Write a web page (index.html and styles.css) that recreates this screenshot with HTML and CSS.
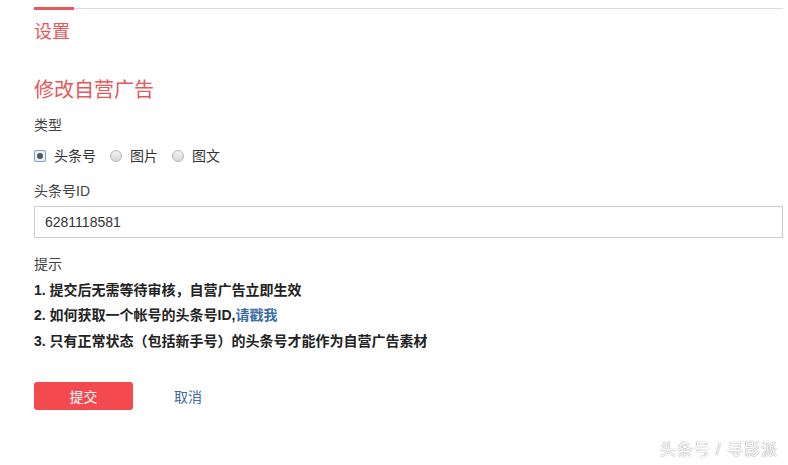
FILE: index.html
```html
<!DOCTYPE html>
<html lang="zh-CN">
<head>
  <meta charset="UTF-8">
  <title>设置 - 修改自营广告</title>
  <link rel="stylesheet" href="styles.css">
</head>
<body>
  <div class="page">
    <div class="tabs">
      <div class="tab-active">
        <span class="tab-bar"></span>
        <h2 class="tab-title">设置</h2>
      </div>
    </div>

    <h1 class="form-title">修改自营广告</h1>

    <div class="field">
      <label class="field-label">类型</label>
      <div class="radios">
        <label class="radio"><span class="dot checked"></span>头条号</label>
        <label class="radio"><span class="dot"></span>图片</label>
        <label class="radio"><span class="dot"></span>图文</label>
      </div>
    </div>

    <div class="field">
      <label class="field-label" for="uid">头条号ID</label>
      <input type="text" id="uid" value="6281118581">
    </div>

    <div class="tips">
      <p class="tips-head">提示</p>
      <p>1. 提交后无需等待审核，自营广告立即生效</p>
      <p>2. 如何获取一个帐号的头条号ID,<a href="#">请戳我</a></p>
      <p>3. 只有正常状态（包括新手号）的头条号才能作为自营广告素材</p>
    </div>

    <div class="actions">
      <button class="btn-submit">提交</button>
      <a class="btn-cancel" href="#">取消</a>
    </div>
  </div>

  <div class="watermark">头条号 / 寻影派</div>
</body>
</html>
```

FILE: styles.css
```css
* {
  box-sizing: border-box;
  margin: 0;
  padding: 0;
  font-family: "Liberation Sans", "Noto Sans CJK SC", sans-serif;
}

body {
  background: #fff;
  color: #333;
  width: 788px;
  height: 465px;
  overflow: hidden;
  position: relative;
}

.page {
  padding: 8px 5px 0 34px;
}

.tabs {
  border-top: 1px solid #dcdcdc;
}

.tab-active {
  width: 40px;
}

.tab-bar {
  display: block;
  height: 3px;
  margin-top: -2px;
  background: #e8575a;
}

.tab-title {
  font-size: 18px;
  font-weight: normal;
  color: #e8575a;
  line-height: 24px;
  margin-top: 10px;
}

.form-title {
  font-size: 20px;
  font-weight: normal;
  color: #e8575a;
  line-height: 26px;
  margin-top: 33px;
}

.field {
  margin-top: 12px;
}

.field-label {
  display: block;
  font-size: 14px;
  line-height: 20px;
  color: #444;
}

.radios {
  display: flex;
  gap: 14px;
  margin-top: 11px;
  margin-bottom: 15px;
}

.radio {
  display: flex;
  align-items: center;
  font-size: 14px;
  line-height: 20px;
  color: #333;
}

.dot {
  width: 12px;
  height: 12px;
  border-radius: 50%;
  border: 1px solid #b5b5b5;
  background: linear-gradient(#f2f2f2, #d8d8d8);
  margin-right: 8px;
  position: relative;
}

.dot.checked {
  border-radius: 2px;
  border-color: #7da2ce;
  background: #eaf1fa;
}

.dot.checked::after {
  content: "";
  position: absolute;
  left: 2px;
  top: 2px;
  width: 6px;
  height: 6px;
  border-radius: 50%;
  background: #555;
}

input {
  display: block;
  width: 749px;
  height: 32px;
  margin-top: 5px;
  padding: 0 10px;
  border: 1px solid #ccc;
  font-size: 14px;
  color: #333;
  outline: none;
}

.tips {
  margin-top: 14px;
  font-size: 14px;
}

.tips p {
  line-height: 25.5px;
  font-weight: bold;
  color: #222;
}

.tips .tips-head {
  font-weight: normal;
  color: #444;
}

.tips a {
  color: #3a6ea5;
  text-decoration: none;
}

.actions {
  display: flex;
  align-items: center;
  margin-top: 28px;
}

.btn-submit {
  width: 99px;
  height: 28px;
  background: #f3494f;
  color: #fff;
  font-size: 14px;
  border: none;
  border-radius: 3px;
}

.btn-cancel {
  margin-left: 41px;
  font-size: 14px;
  color: #3e6a9d;
  text-decoration: none;
}

.watermark {
  position: absolute;
  right: 10px;
  bottom: 5px;
  font-size: 16px;
  color: #fff;
  text-shadow: 0 0 1px #999, 0 0 1px #999;
  letter-spacing: 1px;
}
```
